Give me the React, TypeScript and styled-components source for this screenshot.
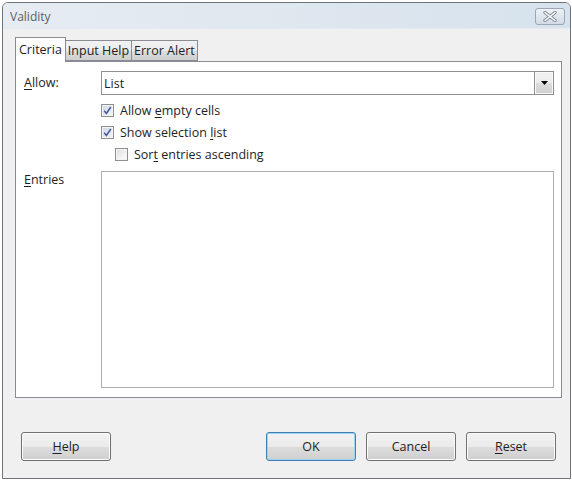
import React from "react";
import styled, { createGlobalStyle, css } from "styled-components";

const Global = createGlobalStyle`
  html, body { margin: 0; padding: 0; background: #ffffff; }
  body { font-family: "Open Sans", "Noto Sans", sans-serif; font-size: 12.5px; color: #1e1e1e; }
  * { box-sizing: border-box; }
`;

const Window = styled.div`
  margin: 2px 0 0 2px;
  width: 569px;
  height: 477px;
  border: 1px solid #6f7378;
  border-radius: 6px 6px 0 0;
  background: #f0f0f0;
  display: flex;
  flex-direction: column;
  overflow: hidden;
`;

const TitleBar = styled.div`
  height: 26px;
  flex: none;
  display: flex;
  align-items: center;
  justify-content: space-between;
  padding: 0 5px 0 7px;
  background: linear-gradient(90deg, #e6ecf2 0%, #dfe7ef 50%, #d6e2ed 100%);
  border-bottom: 1px solid #e4eaf0;
`;

const Title = styled.span`
  font-size: 12px;
  color: #5a5f66;
  padding-top: 1px;
`;

const CloseButton = styled.div`
  width: 30px;
  height: 17px;
  margin-top: 2px;
  border: 1px solid #9aa7b5;
  border-radius: 3px;
  background: linear-gradient(180deg, #eef2f6 0%, #dfe6ed 50%, #d3dce6 100%);
  display: flex;
  align-items: center;
  justify-content: center;
`;

const Body = styled.div`
  flex: 1;
  display: flex;
  flex-direction: column;
  padding: 8px 8px 0 12px;
`;

const TabStrip = styled.div`
  display: flex;
  align-items: flex-end;
  height: 24px;
  position: relative;
  z-index: 1;
`;

const Tab = styled.div<{ $active?: boolean }>`
  height: ${(p) => (p.$active ? "25px" : "21px")};
  margin-bottom: ${(p) => (p.$active ? "-1px" : "0")};
  padding: 0 ${(p) => (p.$active ? "3px" : "2px")};
  display: flex;
  align-items: center;
  border: 1px solid #898c95;
  border-bottom: ${(p) => (p.$active ? "none" : "1px solid #898c95")};
  margin-left: -1px;
  font-size: 12.5px;
  color: #1e1e1e;
  ${(p) =>
    p.$active
      ? css`
          background: #ffffff;
          margin-left: 0;
          padding-bottom: 2px;
        `
      : css`
          background: linear-gradient(180deg, #f2f2f2 0%, #ebebeb 50%, #dddddd 51%, #cfcfcf 100%);
        `}
`;

const Panel = styled.div`
  height: 337px;
  flex: none;
  border: 1px solid #898c95;
  background: #ffffff;
  padding: 9px 7px 9px 8px;
  display: flex;
  flex-direction: column;
`;

const FieldRow = styled.div<{ $grow?: boolean }>`
  display: grid;
  grid-template-columns: 77px 1fr;
  align-items: ${(p) => (p.$grow ? "stretch" : "center")};
  ${(p) => p.$grow && css`flex: 1; margin-top: 6px;`}
`;

const Label = styled.span<{ $top?: boolean }>`
  font-size: 12.5px;
  line-height: 16px;
  color: #1e1e1e;
  ${(p) => p.$top && css`padding-top: 1px;`}
`;

const Combo = styled.div`
  height: 24px;
  border: 1px solid #8e8f8f;
  background: #ffffff;
  display: flex;
  align-items: center;
  padding-left: 2px;
  justify-content: space-between;
`;

const ComboText = styled.span`
  font-size: 12.5px;
`;

const DropButton = styled.div`
  width: 19px;
  height: 22px;
  border-left: 1px solid #8e8f8f;
  background: linear-gradient(180deg, #f2f2f2 0%, #ebebeb 50%, #dddddd 51%, #cfcfcf 100%);
  display: flex;
  align-items: center;
  justify-content: center;
  box-shadow: inset 0 0 0 1px #f8f8f8;
`;

const CheckRow = styled.label<{ $indent?: number }>`
  height: 22px;
  display: flex;
  align-items: center;
  gap: 6px;
  margin-left: ${(p) => 77 + (p.$indent ?? 0)}px;
  font-size: 12.5px;
  color: #1e1e1e;
`;

const Box = styled.span<{ $checked?: boolean }>`
  width: 13px;
  height: 13px;
  flex: none;
  border: 1px solid #8f8f8f;
  background: linear-gradient(135deg, #dcdcdc 0%, #f3f3f3 60%, #ffffff 100%);
  box-shadow: inset 0 0 0 1px #f4f4f4;
  display: flex;
  align-items: center;
  justify-content: center;
  ${(p) =>
    p.$checked &&
    css`
      background: linear-gradient(135deg, #cfd6e6 0%, #e4e9f2 60%, #f4f6fa 100%);
    `}
`;

const Spacer = styled.div`
  height: 4px;
  flex: none;
`;

const ListBox = styled.div`
  border: 1px solid #abadb3;
  background: #ffffff;
  height: 217px;
`;

const ButtonRow = styled.div`
  display: flex;
  justify-content: space-between;
  align-items: center;
  margin-top: 34px;
  padding: 0 6px 0 6px;
`;

const ButtonGroup = styled.div`
  display: flex;
  gap: 10px;
`;

const Button = styled.div<{ $default?: boolean }>`
  width: 90px;
  height: 29px;
  border: 1px solid ${(p) => (p.$default ? "#3c7fb1" : "#707070")};
  border-radius: 3px;
  background: linear-gradient(180deg, #f2f2f2 0%, #ebebeb 50%, #dddddd 51%, #cfcfcf 100%);
  box-shadow: inset 0 0 0 1px ${(p) => (p.$default ? "#9fd5f4" : "#fcfcfc")};
  display: flex;
  align-items: center;
  justify-content: center;
  font-size: 12.5px;
  color: #1e1e1e;
`;

const U = styled.span`
  text-decoration: underline;
  text-underline-offset: 2px;
`;

const Check = () => (
  <svg width="9" height="9" viewBox="0 0 9 9">
    <path d="M1.2 4.8 L3.4 7.4 L7.8 1" fill="none" stroke="#4a5f95" strokeWidth="1.6" />
  </svg>
);

export default function App() {
  return (
    <>
      <Global />
      <Window>
        <TitleBar>
          <Title>Validity</Title>
          <CloseButton>
            <svg width="14" height="11" viewBox="0 0 14 11">
              <path d="M2 1.5 L12 9.5 M12 1.5 L2 9.5" stroke="#7d8a98" strokeWidth="3.4" strokeLinecap="round" />
              <path d="M2 1.5 L12 9.5 M12 1.5 L2 9.5" stroke="#ffffff" strokeWidth="1.6" strokeLinecap="round" />
            </svg>
          </CloseButton>
        </TitleBar>
        <Body>
          <TabStrip>
            <Tab $active>Criteria</Tab>
            <Tab>Input Help</Tab>
            <Tab>Error Alert</Tab>
          </TabStrip>
          <Panel>
            <FieldRow>
              <Label>
                <U>A</U>llow:
              </Label>
              <Combo>
                <ComboText>List</ComboText>
                <DropButton>
                  <svg width="7" height="4" viewBox="0 0 7 4">
                    <path d="M0 0 H7 L3.5 4 Z" fill="#000" />
                  </svg>
                </DropButton>
              </Combo>
            </FieldRow>
            <Spacer />
            <CheckRow>
              <Box $checked>
                <Check />
              </Box>
              <span>
                Allow <U>e</U>mpty cells
              </span>
            </CheckRow>
            <CheckRow>
              <Box $checked>
                <Check />
              </Box>
              <span>
                Show selection <U>l</U>ist
              </span>
            </CheckRow>
            <CheckRow $indent={14}>
              <Box />
              <span>
                Sor<U>t</U> entries ascending
              </span>
            </CheckRow>
            <FieldRow $grow>
              <Label $top>
                <U>E</U>ntries
              </Label>
              <ListBox />
            </FieldRow>
          </Panel>
          <ButtonRow>
            <Button>
              <U>H</U>elp
            </Button>
            <ButtonGroup>
              <Button $default>OK</Button>
              <Button>Cancel</Button>
              <Button>
                <U>R</U>eset
              </Button>
            </ButtonGroup>
          </ButtonRow>
        </Body>
      </Window>
    </>
  );
}
